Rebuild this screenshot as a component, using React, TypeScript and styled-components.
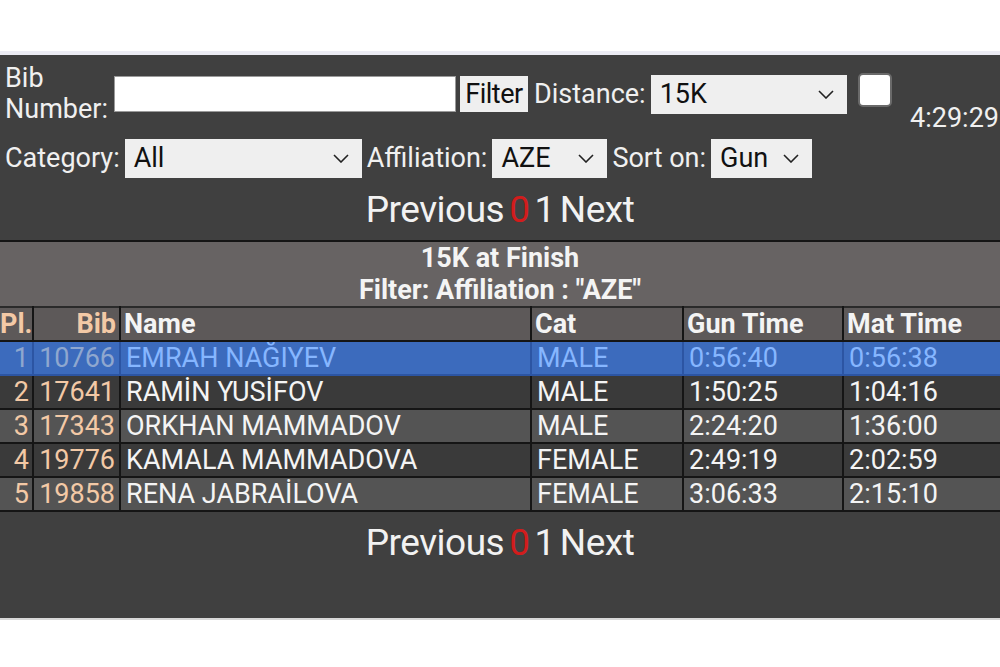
import styled, { createGlobalStyle } from 'styled-components'

const GlobalStyle = createGlobalStyle`
  html, body {
    margin: 0;
    padding: 0;
    background: #ffffff;
    font-family: Roboto, "Noto Sans", "Liberation Sans", sans-serif;
  }
`

const Page = styled.div`
  padding-top: 51px;
  height: 667px;
  box-sizing: border-box;
`

const Panel = styled.div`
  background: #404040;
  border-top: 4px solid #ececf4;
  border-bottom: 2px solid #d8d8d8;
  height: 569px;
  box-sizing: border-box;
  padding-top: 7px;
  color: #f2f2f2;
`

const ControlRow = styled.div<{ $top?: number }>`
  display: flex;
  align-items: center;
  gap: 4px;
  padding: 0 0 0 5px;
  margin-top: ${p => p.$top || 0}px;
  height: ${p => (p.$top ? 40 : 64)}px;
`

const Label = styled.span<{ $w?: number }>`
  font-size: 27px;
  line-height: 31px;
  color: #f0f0f0;
  white-space: ${p => (p.$w ? 'normal' : 'nowrap')};
  width: ${p => (p.$w ? `${p.$w}px` : 'auto')};
  margin-right: 1px;
`

const TextInput = styled.input`
  width: 342px;
  height: 36px;
  box-sizing: border-box;
  border: 1px solid #9a9a9a;
  background: #ffffff;
  font-size: 24px;
  margin: 0;
`

const FilterButton = styled.button`
  height: 36px;
  width: 68px;
  box-sizing: border-box;
  padding: 0;
  border: none;
  background: #efefef;
  color: #111;
  font-family: Roboto, sans-serif;
  font-size: 27px;
  letter-spacing: -0.5px;
  margin-right: 2px;
`

const SelectBox = styled.div<{ $w: number }>`
  position: relative;
  width: ${p => p.$w}px;
  height: 39px;
  background: #efefef;
  box-sizing: border-box;
  display: flex;
  align-items: center;
  padding-left: 9px;
  font-size: 27px;
  color: #111;
  margin-right: 1px;
  svg {
    position: absolute;
    right: 13px;
    top: 15px;
  }
`

const Check = styled.div`
  width: 34px;
  height: 34px;
  box-sizing: border-box;
  background: #ffffff;
  border: 2px solid #6a6a6a;
  border-radius: 5px;
  margin-left: 6px;
  align-self: flex-start;
  margin-top: 11px;
`

const Clock = styled.span`
  margin-left: auto;
  align-self: flex-end;
  font-size: 27px;
  color: #f0f0f0;
  padding-right: 1px;
  margin-bottom: -8px;
`

const Pager = styled.div<{ $h: number }>`
  height: ${p => p.$h}px;
  display: flex;
  justify-content: center;
  align-items: center;
  gap: 5px;
  font-size: 37px;
  letter-spacing: -0.5px;
  color: #f2f2f2;
`

const Current = styled.span`
  color: #d21c1c;
`

const Results = styled.table`
  width: 100%;
  border-collapse: collapse;
  table-layout: fixed;
  border-top: 2px solid #151515;
  border-bottom: 2px solid #151515;
`

const TitleCell = styled.td`
  background: #676363;
  text-align: center;
  font-weight: 700;
  font-size: 27px;
  height: 32px;
  line-height: 32px;
  padding: 0;
  color: #f4f4f4;
`

const HeadCell = styled.th<{ $peach?: boolean; $right?: boolean }>`
  background: #5d5959;
  border: 2px solid #151515;
  border-top: 2px solid #2a2a2a;
  height: 32px;
  padding: 0 3px;
  font-size: 27px;
  font-weight: 700;
  text-align: ${p => (p.$right ? 'right' : 'left')};
  color: ${p => (p.$peach ? '#f3c9a6' : '#f4f4f4')};
  white-space: nowrap;
  overflow: hidden;
  &:first-child { border-left: none; padding: 0; text-align: left; }
  &:last-child { border-right: none; }
`

const Row = styled.tr<{ $tone: 'sel' | 'dark' | 'light' }>`
  background: ${p => (p.$tone === 'sel' ? '#3c6bbd' : p.$tone === 'dark' ? '#3a3a3a' : '#545454')};
  color: ${p => (p.$tone === 'sel' ? '#86b6ff' : '#f4f4f4')};
  td {
    border-color: ${p => (p.$tone === 'sel' ? '#2c55a3' : '#151515')};
  }
`

const Cell = styled.td<{ $peach?: boolean; $right?: boolean; $sel?: boolean }>`
  border: 2px solid #151515;
  height: 32px;
  padding: 0 4px 0 5px;
  font-size: 27px;
  line-height: 32px;
  white-space: nowrap;
  overflow: hidden;
  text-align: ${p => (p.$right ? 'right' : 'left')};
  color: ${p => (p.$peach ? (p.$sel ? '#8fa7cf' : '#f3c9a6') : 'inherit')};
  &:first-child { border-left: none; padding: 0 3px 0 0; }
  &:last-child { border-right: none; }
`

const Chevron = () => (
  <svg width="16" height="9" viewBox="0 0 16 9">
    <polyline points="1,1 8,8 15,1" fill="none" stroke="#222" strokeWidth="1.6" />
  </svg>
)

const Select = ({ w, value }: { w: number; value: string }) => (
  <SelectBox $w={w}>
    {value}
    <Chevron />
  </SelectBox>
)

const runners = [
  { pl: 1, bib: '10766', name: 'EMRAH NAĞIYEV', cat: 'MALE', gun: '0:56:40', mat: '0:56:38' },
  { pl: 2, bib: '17641', name: 'RAMİN YUSİFOV', cat: 'MALE', gun: '1:50:25', mat: '1:04:16' },
  { pl: 3, bib: '17343', name: 'ORKHAN MAMMADOV', cat: 'MALE', gun: '2:24:20', mat: '1:36:00' },
  { pl: 4, bib: '19776', name: 'KAMALA MAMMADOVA', cat: 'FEMALE', gun: '2:49:19', mat: '2:02:59' },
  { pl: 5, bib: '19858', name: 'RENA JABRAİLOVA', cat: 'FEMALE', gun: '3:06:33', mat: '2:15:10' },
]

const Pagination = ({ h }: { h: number }) => (
  <Pager $h={h}>
    <span>Previous</span>
    <Current>0</Current>
    <span>1</span>
    <span>Next</span>
  </Pager>
)

const App = () => {
  return (
    <Page>
      <GlobalStyle />
      <Panel>
        <ControlRow>
          <Label $w={104}>Bib Number:</Label>
          <TextInput />
          <FilterButton>Filter</FilterButton>
          <Label>Distance:</Label>
          <Select w={196} value="15K" />
          <Check />
          <Clock>4:29:29</Clock>
        </ControlRow>
        <ControlRow $top={12}>
          <Label>Category:</Label>
          <Select w={237} value="All" />
          <Label>Affiliation:</Label>
          <Select w={115} value="AZE" />
          <Label>Sort on:</Label>
          <Select w={101} value="Gun" />
        </ControlRow>
        <Pagination h={62} />
        <Results>
          <colgroup>
            <col style={{ width: 33 }} />
            <col style={{ width: 87 }} />
            <col style={{ width: 411 }} />
            <col style={{ width: 152 }} />
            <col style={{ width: 160 }} />
            <col />
          </colgroup>
          <thead>
            <tr>
              <TitleCell colSpan={6}>15K at Finish</TitleCell>
            </tr>
            <tr>
              <TitleCell colSpan={6}>Filter: Affiliation : "AZE"</TitleCell>
            </tr>
            <tr>
              <HeadCell $peach $right>Pl.</HeadCell>
              <HeadCell $peach $right>Bib</HeadCell>
              <HeadCell>Name</HeadCell>
              <HeadCell>Cat</HeadCell>
              <HeadCell>Gun Time</HeadCell>
              <HeadCell>Mat Time</HeadCell>
            </tr>
          </thead>
          <tbody>
            {runners.map((r, i) => {
              const tone = i === 0 ? 'sel' : i % 2 === 1 ? 'dark' : 'light'
              return (
                <Row key={r.bib} $tone={tone}>
                  <Cell $peach $right $sel={i === 0}>{r.pl}</Cell>
                  <Cell $peach $right $sel={i === 0}>{r.bib}</Cell>
                  <Cell>{r.name}</Cell>
                  <Cell>{r.cat}</Cell>
                  <Cell>{r.gun}</Cell>
                  <Cell>{r.mat}</Cell>
                </Row>
              )
            })}
          </tbody>
        </Results>
        <Pagination h={60} />
      </Panel>
    </Page>
  )
}

export default App
